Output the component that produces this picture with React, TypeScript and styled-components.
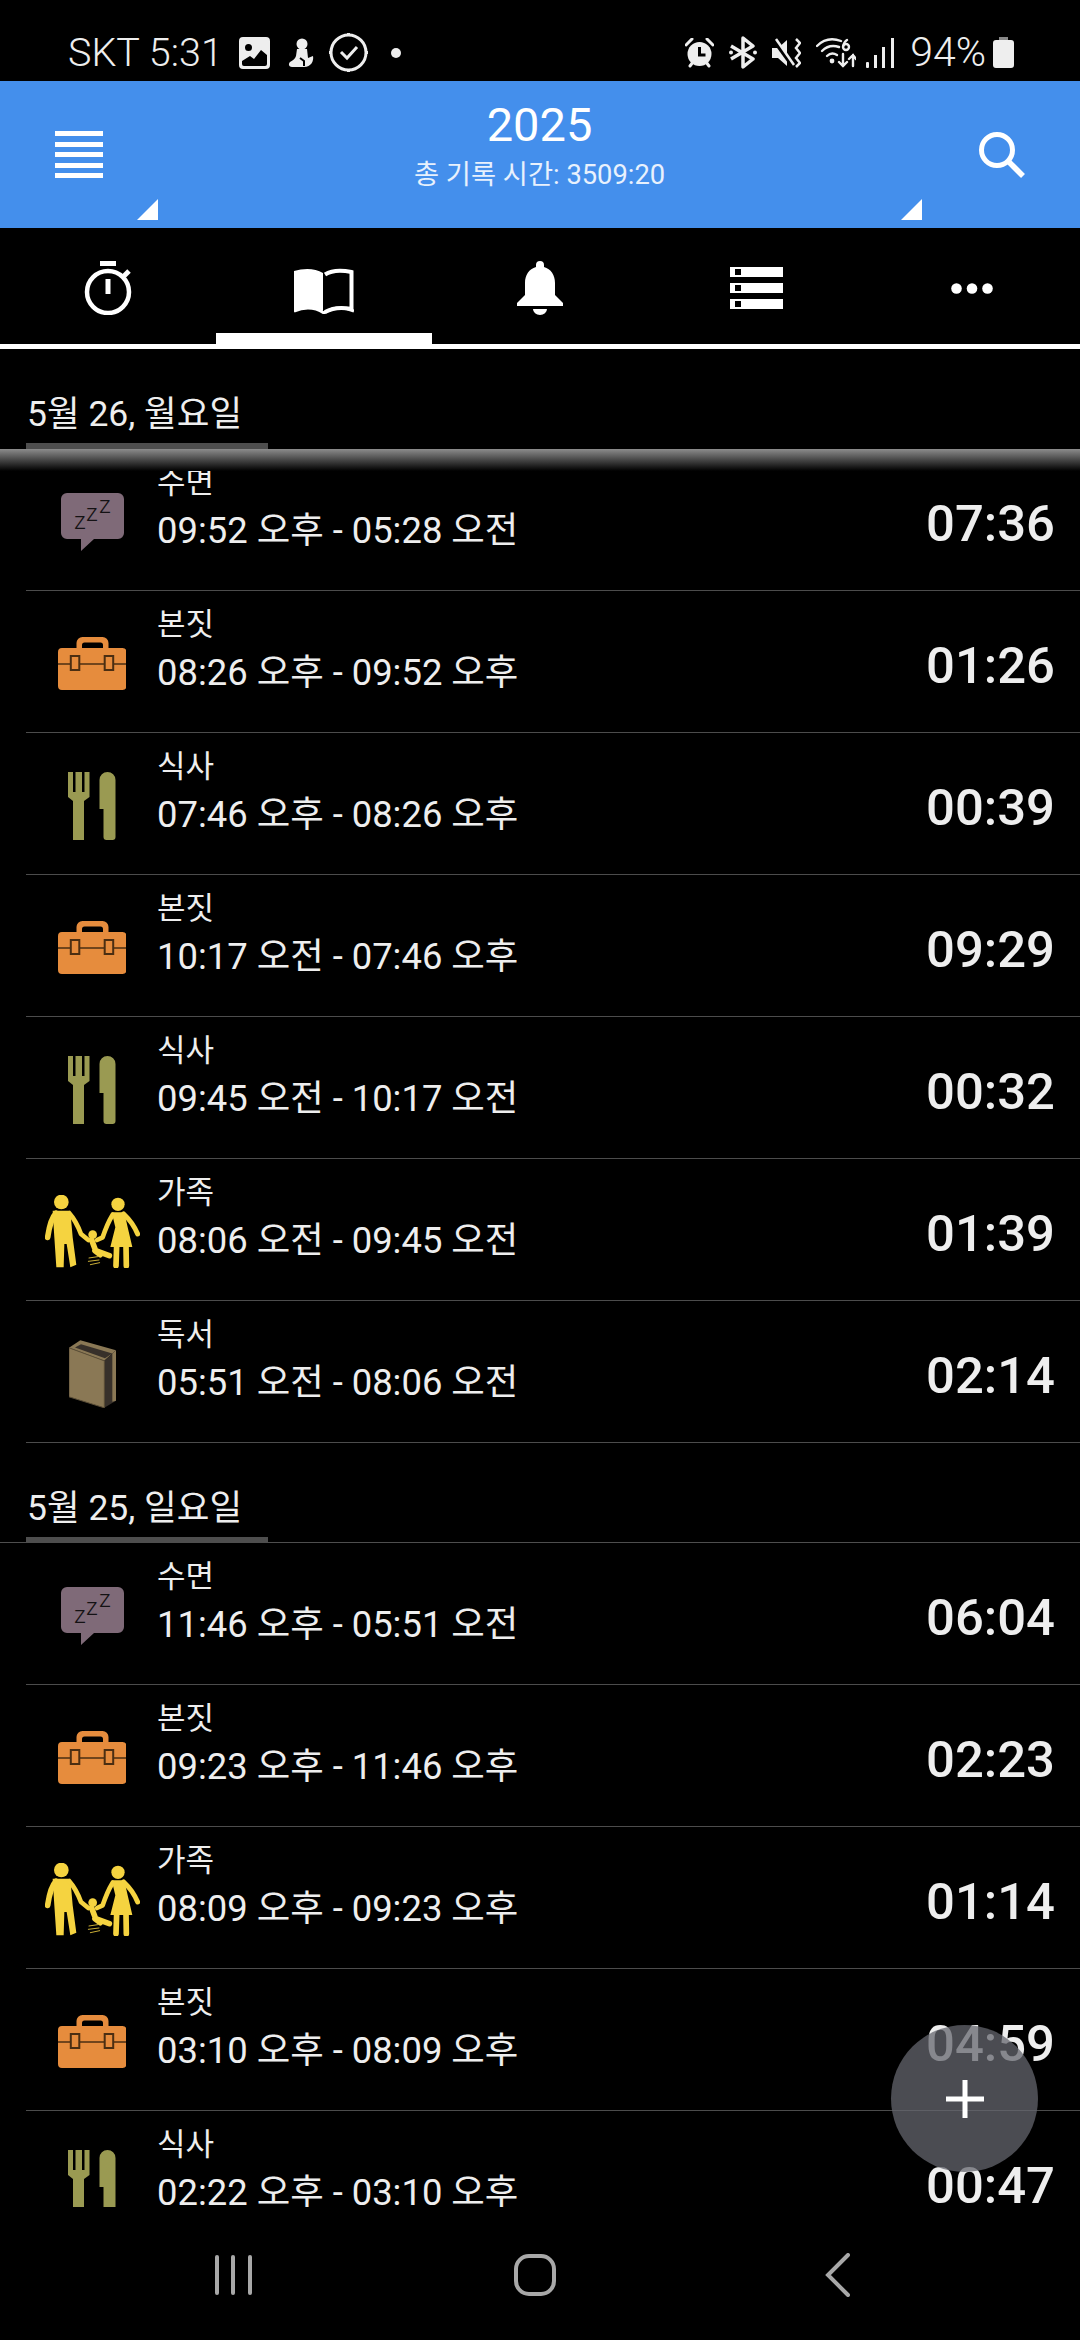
import styled, { createGlobalStyle } from "styled-components";

const GlobalStyle = createGlobalStyle`
  html, body {
    margin: 0;
    padding: 0;
    background: #000;
  }
  * {
    box-sizing: border-box;
  }
`;

const Screen = styled.div`
  width: 1080px;
  height: 2340px;
  display: flex;
  flex-direction: column;
  overflow: hidden;
  background: #000;
  color: #eeeeee;
  font-family: Roboto, "Noto Sans CJK KR", sans-serif;
`;

const StatusBar = styled.div`
  height: 81px;
  flex: none;
  display: flex;
  align-items: center;
  justify-content: space-between;
  padding: 24px 66px 0 68px;
`;

const StatusGroup = styled.div`
  display: flex;
  align-items: center;
  height: 100%;
`;

const StatusText = styled.span<{ $size: number; $ml?: number }>`
  font-size: ${(p) => p.$size}px;
  font-weight: 300;
  line-height: 1;
  margin-left: ${(p) => p.$ml ?? 0}px;
  white-space: nowrap;
`;

const StatusIcon = styled.svg<{ $ml: number }>`
  display: block;
  flex: none;
  margin-left: ${(p) => p.$ml}px;
`;

const Header = styled.div`
  height: 147px;
  flex: none;
  position: relative;
  display: grid;
  grid-template-columns: 1fr auto 1fr;
  align-items: center;
  background: #448fec;
  padding: 0 53px 0 55px;
  color: #fff;
`;

const HeaderTitle = styled.div`
  display: flex;
  flex-direction: column;
  align-items: center;
  gap: 4px;
  padding: 0 3px 17px 0;
`;

const Year = styled.div`
  font-size: 47px;
  line-height: 54px;
`;

const TotalTime = styled.div`
  font-size: 27.300px;
  line-height: 38px;
  color: #e8f1fd;
`;

const MenuBars = styled.div`
  width: 48px;
  display: flex;
  flex-direction: column;
  gap: 5.5px;
`;

const MenuBar = styled.span`
  height: 5px;
  background: #fff;
`;

const SearchIcon = styled.svg`
  justify-self: end;
`;

const Corner = styled.span<{ $left: number }>`
  position: absolute;
  left: ${(p) => p.$left}px;
  top: 118px;
  width: 21px;
  height: 21px;
  background: #fff;
  clip-path: polygon(100% 0, 100% 100%, 0 100%);
`;

const Tabs = styled.div`
  height: 121px;
  flex: none;
  display: grid;
  grid-template-columns: repeat(5, 216px);
  border-bottom: 5px solid #fff;
`;

const Tab = styled.div<{ $active?: boolean }>`
  position: relative;
  display: flex;
  align-items: center;
  justify-content: center;
  padding-top: 4px;
  &::after {
    content: "";
    display: ${(p) => (p.$active ? "block" : "none")};
    position: absolute;
    left: 0;
    right: 0;
    bottom: 0;
    height: 11px;
    background: #fff;
  }
`;

const Content = styled.div`
  flex: 1;
  min-height: 0;
  position: relative;
  overflow: hidden;
`;

const DateHeader = styled.div<{ $shadow?: boolean }>`
  position: relative;
  height: 100px;
  padding: 44px 0 0 27px;
  font-size: 35.500px;
  line-height: 42px;
  border-bottom: ${(p) => (p.$shadow ? "none" : "1px solid #4e4e4e")};
  &::before {
    content: "";
    position: absolute;
    left: 26px;
    bottom: ${(p) => (p.$shadow ? "0" : "-1px")};
    width: 242px;
    height: 6px;
    background: #4e4e4e;
  }
  &::after {
    content: "";
    display: ${(p) => (p.$shadow ? "block" : "none")};
    position: absolute;
    z-index: 2;
    left: 0;
    right: 0;
    top: 100%;
    height: 22px;
    background: linear-gradient(#8c8c8c, #000);
  }
`;

const Row = styled.div`
  height: 142px;
  margin-left: 26px;
  display: grid;
  grid-template-columns: 131px 1fr auto;
  align-items: center;
  border-bottom: 1px solid #4c4c4c;
`;

const IconSlot = styled.div`
  display: flex;
  justify-content: center;
  padding: 4px 0 0 1px;
`;

const RowText = styled.div`
  align-self: start;
  display: flex;
  flex-direction: column;
  padding-top: 14px;
  gap: 3px;
`;

const Category = styled.div`
  font-size: 31px;
  line-height: 40px;
`;

const Range = styled.div`
  font-size: 36.400px;
  line-height: 50px;
  white-space: nowrap;
`;

const Duration = styled.div`
  font-size: 50.800px;
  font-weight: 500;
  line-height: 60px;
  padding: 9px 25px 0 0;
`;

const Fab = styled.div`
  position: absolute;
  right: 42px;
  bottom: 35px;
  width: 147px;
  height: 147px;
  border-radius: 50%;
  background: rgba(100, 102, 109, 0.75);
  display: flex;
  align-items: center;
  justify-content: center;
  z-index: 3;
`;

const NavBar = styled.div`
  height: 133px;
  flex: none;
  display: grid;
  grid-template-columns: repeat(3, 302px);
  justify-content: center;
  align-items: center;
  justify-items: center;
  padding: 3px 10px 0 0;
`;

const RecentsIcon = styled.div`
  display: flex;
  gap: 12.5px;
`;

const RecentsBar = styled.span`
  width: 4px;
  height: 40px;
  border-radius: 2px;
  background: #a8a8a8;
`;

const HomeIcon = styled.div`
  width: 42px;
  height: 42px;
  border: 4px solid #a8a8a8;
  border-radius: 15px;
`;

const SleepIcon = () => (
  <svg width="63" height="58" viewBox="0 0 63 58" overflow="visible" aria-hidden="true">
    <path d="M6 0h51a6 6 0 0 1 6 6v34a6 6 0 0 1-6 6H33L20 58V46H6a6 6 0 0 1-6-6V6a6 6 0 0 1 6-6z" fill="#7f6a78" />
    <g fill="#141214" fontFamily="Roboto, sans-serif" fontSize="24" fontWeight="300">
      <text x="13" y="36">z</text>
      <text x="25" y="28">z</text>
      <text x="38" y="20">z</text>
    </g>
  </svg>
);

const CaseIcon = () => (
  <svg width="68" height="53" viewBox="0 0 68 53" aria-hidden="true">
    <path
      d="M18.5 11V6a6 6 0 0 1 6-6h20a6 6 0 0 1 6 6v5h14a4 4 0 0 1 4 4v34a4 4 0 0 1-4 4H4a4 4 0 0 1-4-4V15a4 4 0 0 1 4-4zM24 11h21V8a2.500 2.500 0 0 0-2.500-2.500h-16A2.500 2.500 0 0 0 24 8z"
      fill="#e68c3d"
      fillRule="evenodd"
    />
    <path d="M0 27h12M22 27h24M56 27h12" stroke="#4b2e12" strokeWidth="1.600" />
    <rect x="12.800" y="19" width="8.500" height="14" fill="#e68c3d" stroke="#4b2e12" strokeWidth="2" />
    <rect x="46.700" y="19" width="8.500" height="14" fill="#e68c3d" stroke="#4b2e12" strokeWidth="2" />
  </svg>
);

const FoodIcon = () => (
  <svg width="48" height="68" viewBox="0 0 48 68" aria-hidden="true">
    <path
      d="M0 0h5v20h2.500V0h6.500v20h2.500V0h5v25l-5.500 4v39h-11V29L0 25z"
      fill="#9a9a52"
    />
    <path d="M31.500 8a8 8 0 0 1 16 0v57a3 3 0 0 1-3 3h-6a3 3 0 0 1-3-3V37h-4z" fill="#9a9a52" />
  </svg>
);

const FamilyIcon = () => (
  <svg width="95" height="73" viewBox="132 193 285 219" aria-hidden="true">
    <g fill="#f5d340">
      <circle cx="181" cy="214" r="22" />
      <circle cx="351" cy="221" r="20" />
      <circle cx="275" cy="312" r="13" />
      <polygon points="155,240 208,240 215,320 226,402 208,410 197,340 190,340 188,410 166,410 160,320" />
      <polygon points="332,245 370,245 380,290 394,349 328,349 343,290" />
    </g>
    <g fill="none" stroke="#f5d340" strokeLinecap="round" strokeLinejoin="round">
      <path d="M165 248Q148 265 140 320" strokeWidth="17" />
      <path d="M205 248Q225 270 240 310L262 328" strokeWidth="14" />
      <path d="M347 345L345 405M375 345L376 405" strokeWidth="17" />
      <path d="M335 252Q318 280 305 320L288 328" strokeWidth="14" />
      <path d="M368 250Q395 275 410 310" strokeWidth="15" />
      <path d="M272 328L284 360L325 375M282 360L298 372" strokeWidth="17" />
    </g>
    <g fill="none" stroke="#c9ad36" strokeWidth="3" strokeLinecap="round">
      <path d="M264 382L290 378M262 392L294 388M268 402L296 396" />
    </g>
  </svg>
);

const BookIcon = () => (
  <svg width="47" height="68" viewBox="204 630 141 203" aria-hidden="true">
    <polygon points="204,653 238,630 345,660 310,692" fill="#8a7855" />
    <polygon points="222,652 240,642 334,670 312,684" fill="#37302a" />
    <polygon points="310,692 345,660 345,812 310,833" fill="#37302a" />
    <polygon points="334,670 345,660 345,812 334,815" fill="#8a7855" />
    <polygon points="204,653 310,692 310,833 204,800" fill="#8a7855" stroke="#5c4f38" strokeWidth="3" />
  </svg>
);

const rowIcons = {
  sleep: <SleepIcon />,
  work: <CaseIcon />,
  food: <FoodIcon />,
  family: <FamilyIcon />,
  book: <BookIcon />,
};

type Entry = {
  icon: keyof typeof rowIcons;
  name: string;
  range: string;
  time: string;
};

const days: { date: string; entries: Entry[] }[] = [
  {
    date: "5월 26, 월요일",
    entries: [
      { icon: "sleep", name: "수면", range: "09:52 오후 - 05:28 오전", time: "07:36" },
      { icon: "work", name: "본짓", range: "08:26 오후 - 09:52 오후", time: "01:26" },
      { icon: "food", name: "식사", range: "07:46 오후 - 08:26 오후", time: "00:39" },
      { icon: "work", name: "본짓", range: "10:17 오전 - 07:46 오후", time: "09:29" },
      { icon: "food", name: "식사", range: "09:45 오전 - 10:17 오전", time: "00:32" },
      { icon: "family", name: "가족", range: "08:06 오전 - 09:45 오전", time: "01:39" },
      { icon: "book", name: "독서", range: "05:51 오전 - 08:06 오전", time: "02:14" },
    ],
  },
  {
    date: "5월 25, 일요일",
    entries: [
      { icon: "sleep", name: "수면", range: "11:46 오후 - 05:51 오전", time: "06:04" },
      { icon: "work", name: "본짓", range: "09:23 오후 - 11:46 오후", time: "02:23" },
      { icon: "family", name: "가족", range: "08:09 오후 - 09:23 오후", time: "01:14" },
      { icon: "work", name: "본짓", range: "03:10 오후 - 08:09 오후", time: "04:59" },
      { icon: "food", name: "식사", range: "02:22 오후 - 03:10 오후", time: "00:47" },
    ],
  },
];

export default function App() {
  return (
    <Screen>
      <GlobalStyle />
      <StatusBar>
        <StatusGroup>
          <StatusText $size={39.5}>SKT 5:31</StatusText>
          {/* gallery */}
          <StatusIcon $ml={16} width="31" height="32" viewBox="0 0 31 32">
            <path
              fillRule="evenodd"
              fill="#eee"
              d="M4 0h23a4 4 0 0 1 4 4v24a4 4 0 0 1-4 4H4a4 4 0 0 1-4-4V4a4 4 0 0 1 4-4zM3 24v3a2 2 0 0 0 2 2h21a2 2 0 0 0 2-2v-9l-6-5-7 9-4-3zM9.500 7a3.500 3.500 0 1 0 0 7 3.500 3.500 0 0 0 0-7z"
            />
          </StatusIcon>
          {/* snowman-like notification */}
          <StatusIcon $ml={18} width="26" height="30" viewBox="0 0 26 30">
            <g fill="#eee">
              <circle cx="14" cy="6" r="5.500" />
              <path d="M9 11h10l1 9 5-2c1 5-2 11-9 11H4c-3 0-4-3-2-5 3-2 5-3 6-6z" />
            </g>
            <path d="M12 20l4 3v5" stroke="#000" strokeWidth="2" fill="none" />
          </StatusIcon>
          {/* clock with check */}
          <StatusIcon $ml={15} width="39" height="39" viewBox="0 0 39 39">
            <circle cx="19.500" cy="19.500" r="17.500" fill="none" stroke="#eee" strokeWidth="3" />
            <path d="M12 19l6 6 10-11" fill="none" stroke="#eee" strokeWidth="3" />
            <path d="M19.500 0v3M19.500 36v3M0 19.500h3M36 19.500h3" stroke="#eee" strokeWidth="3" />
          </StatusIcon>
          <StatusIcon $ml={23} width="10" height="10" viewBox="0 0 10 10">
            <circle cx="5" cy="5" r="5" fill="#eee" />
          </StatusIcon>
        </StatusGroup>
        <StatusGroup>
          {/* alarm */}
          <StatusIcon $ml={0} width="29" height="30" viewBox="0 0 29 30">
            <circle cx="14.500" cy="16" r="12" fill="#eee" />
            <path d="M14.500 9v8h6" fill="none" stroke="#000" strokeWidth="3" />
            <path d="M1 7l6-6M28 7l-6-6" stroke="#eee" strokeWidth="3" strokeLinecap="round" />
            <path d="M5 28l3-4M24 28l-3-4" stroke="#eee" strokeWidth="3" strokeLinecap="round" />
          </StatusIcon>
          {/* bluetooth */}
          <StatusIcon $ml={15} width="28" height="33" viewBox="0 0 28 33">
            <path
              d="M2 10l22 13-10 8V2l10 8L2 23"
              fill="none"
              stroke="#eee"
              strokeWidth="3.500"
              strokeLinejoin="round"
            />
            <circle cx="2" cy="16.500" r="2" fill="#eee" />
            <circle cx="26" cy="16.500" r="2" fill="#eee" />
          </StatusIcon>
          {/* vibrate mute */}
          <StatusIcon $ml={15} width="29" height="30" viewBox="0 0 29 30">
            <path d="M0 10h6L15 2v26l-9-8H0z" fill="#eee" />
            <path d="M1 1l19 26" stroke="#000" strokeWidth="4" />
            <path d="M4 1l18 26" stroke="#eee" strokeWidth="2.500" />
            <path d="M24 1l4 4-4 5 4 5-4 5 4 5-4 4" fill="none" stroke="#eee" strokeWidth="2.500" />
          </StatusIcon>
          {/* wifi 6 */}
          <StatusIcon $ml={15} width="40" height="30" viewBox="0 0 40 30">
            <g fill="none" stroke="#eee" strokeWidth="2.400" strokeLinecap="round">
              <path d="M1 8c7-7 16-8 24-5" />
              <path d="M6 13c5-5 11-6 17-4" />
              <path d="M11 18c3-3 7-3 10-1" />
              <circle cx="30" cy="9" r="3" />
              <path d="M31 2c-2 1-3 3-3.800 6" />
              <path d="M27 16v12M23 24l4 4 4-4M37 28V17M33 21l4-4 3 4" />
            </g>
            <circle cx="16" cy="23" r="2.400" fill="#eee" />
          </StatusIcon>
          {/* signal */}
          <StatusIcon $ml={10} width="28" height="30" viewBox="0 0 28 30">
            <g fill="#eee">
              <rect x="0" y="24" width="3" height="6" rx="1" />
              <rect x="8" y="17" width="3" height="13" />
              <rect x="16" y="9" width="3" height="21" />
              <rect x="25" y="0" width="3" height="30" />
            </g>
          </StatusIcon>
          <StatusText $size={41} $ml={16}>94%</StatusText>
          {/* battery */}
          <StatusIcon $ml={7} width="21" height="31" viewBox="0 0 21 31">
            <path d="M6 0h9v3h3a3 3 0 0 1 3 3v22a3 3 0 0 1-3 3H3a3 3 0 0 1-3-3V6a3 3 0 0 1 3-3h3z" fill="#eee" />
            <path d="M6 0h9v3H6z" fill="#888" />
          </StatusIcon>
        </StatusGroup>
      </StatusBar>

      <Header>
        <MenuBars>
          {[0, 1, 2, 3, 4].map((i) => (
            <MenuBar key={i} />
          ))}
        </MenuBars>
        <HeaderTitle>
          <Year>2025</Year>
          <TotalTime>총 기록 시간: 3509:20</TotalTime>
        </HeaderTitle>
        <SearchIcon width="50" height="50" viewBox="0 0 50 50" aria-hidden="true">
          <circle cx="20" cy="20" r="15.500" fill="none" stroke="#fff" strokeWidth="5" />
          <path d="M31 31l15 15" stroke="#fff" strokeWidth="5.500" />
        </SearchIcon>
        <Corner $left={137} />
        <Corner $left={901} />
      </Header>

      <Tabs>
        <Tab>
          <svg width="48" height="54" viewBox="0 0 48 54" aria-hidden="true">
            <circle cx="24" cy="31" r="21" fill="none" stroke="#fff" strokeWidth="4.500" />
            <path d="M16 2.500h16" stroke="#fff" strokeWidth="5" />
            <path d="M24 18v15" stroke="#fff" strokeWidth="5" />
            <path d="M40 15l5-5" stroke="#fff" strokeWidth="5" />
          </svg>
        </Tab>
        <Tab $active>
          <svg width="60" height="51" viewBox="0 -5 60 51" aria-hidden="true">
            <path d="M0 3C10 0 21 0 29 5v38C21 39 10 39 0 44z" fill="#fff" />
            <path
              d="M31 6.500C38 2 48 2 57.500 4v37C48 39 38 40 31 44"
              fill="none"
              stroke="#fff"
              strokeWidth="4"
            />
            <path d="M0 43c10-4 21-4 30 2 9-6 20-6 30-2" fill="none" stroke="#fff" strokeWidth="3" />
          </svg>
        </Tab>
        <Tab>
          <svg width="46" height="54" viewBox="0 0 46 54" aria-hidden="true">
            <path
              d="M23 0a4 4 0 0 1 4 4v2c7 2 11 8 11 16v12l8 8v3H0v-3l8-8V22c0-8 4-14 11-16V4a4 4 0 0 1 4-4z"
              fill="#fff"
            />
            <path d="M16 48a7 6 0 0 0 14 0z" fill="#fff" />
          </svg>
        </Tab>
        <Tab>
          <svg width="53" height="42" viewBox="0 0 53 42" aria-hidden="true">
            <g fill="#fff">
              <rect y="0" width="53" height="10" />
              <rect y="16" width="53" height="10" />
              <rect y="32" width="53" height="10" />
            </g>
            <g fill="#000">
              <rect x="5" y="2" width="6" height="6" />
              <rect x="5" y="18" width="6" height="6" />
              <rect x="5" y="34" width="6" height="6" />
            </g>
          </svg>
        </Tab>
        <Tab>
          <svg width="42" height="11" viewBox="0 0 42 11" aria-hidden="true">
            <g fill="#fff">
              <circle cx="5.500" cy="5.500" r="5.300" />
              <circle cx="21" cy="5.500" r="5.300" />
              <circle cx="36.500" cy="5.500" r="5.300" />
            </g>
          </svg>
        </Tab>
      </Tabs>

      <Content>
        {days.map((day, i) => (
          <div key={day.date}>
            <DateHeader $shadow={i === 0}>{day.date}</DateHeader>
            {day.entries.map((e) => (
              <Row key={e.range}>
                <IconSlot>{rowIcons[e.icon]}</IconSlot>
                <RowText>
                  <Category>{e.name}</Category>
                  <Range>{e.range}</Range>
                </RowText>
                <Duration>{e.time}</Duration>
              </Row>
            ))}
          </div>
        ))}
        <Fab>
          <svg width="38" height="38" viewBox="0 0 38 38" aria-hidden="true">
            <path d="M19 0v38M0 19h38" stroke="#fff" strokeWidth="5" />
          </svg>
        </Fab>
      </Content>

      <NavBar>
        <RecentsIcon>
          <RecentsBar />
          <RecentsBar />
          <RecentsBar />
        </RecentsIcon>
        <HomeIcon />
        <svg width="25" height="44" viewBox="0 0 25 44" aria-hidden="true">
          <path d="M23 2L3 22l20 20" fill="none" stroke="#a8a8a8" strokeWidth="4" strokeLinecap="round" />
        </svg>
      </NavBar>
    </Screen>
  );
}
